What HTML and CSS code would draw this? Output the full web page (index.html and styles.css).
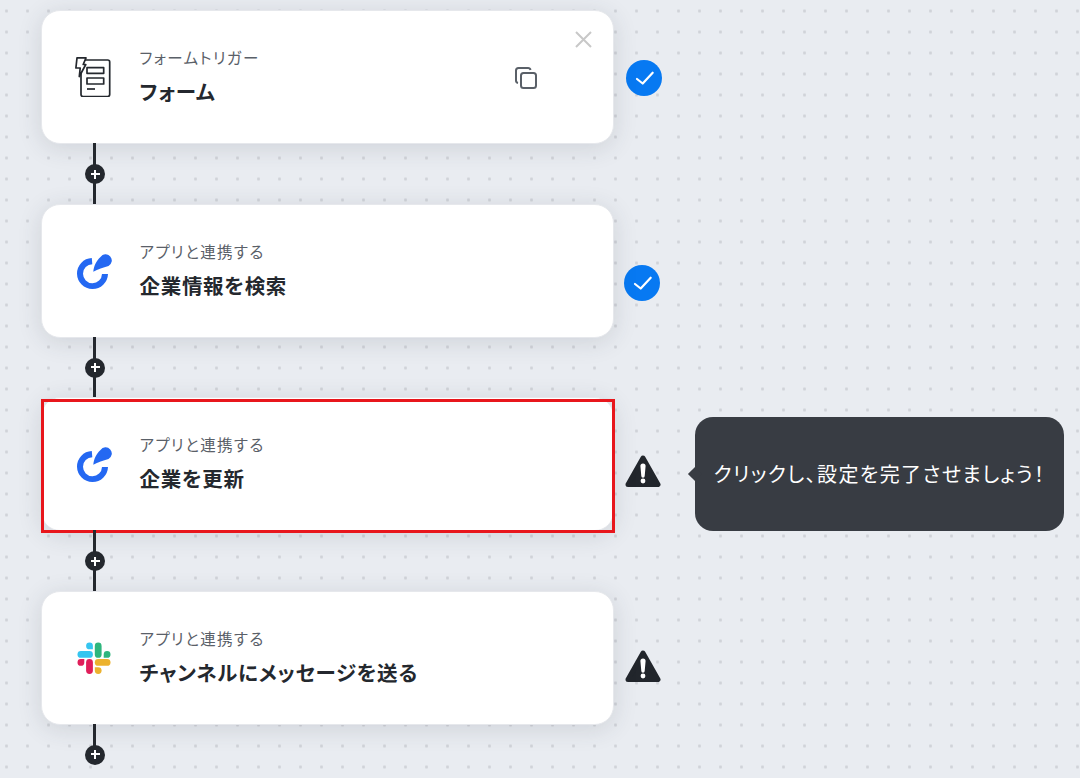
FILE: index.html
```html
<!DOCTYPE html>
<html lang="ja">
<head>
  <meta charset="UTF-8" />
  <title>フロー</title>
  <link rel="stylesheet" href="styles.css">
</head>
<body>
  <svg class="defs" width="0" height="0">
    <symbol id="app-logo" viewBox="0 0 36 36">
      <path d="M15.8 5 A15.5 15.5 0 1 0 32 21 L26 21 A9.5 9.5 0 1 1 16.3 11.2 Z" fill="#2468f2"/>
      <path d="M17.3 18.7 C18 13 20 8 24.5 4 A6.2 6.2 0 1 1 32.5 13 C27 15 22 16 17.3 18.7 Z" fill="#2468f2"/>
    </symbol>
    <symbol id="warn" viewBox="0 0 36 33">
      <path d="M18 3 L33 29.5 H3 Z" fill="#22262c" stroke="#22262c" stroke-width="5" stroke-linejoin="round"/>
      <path d="M15.4 11 a2.6 2.6 0 0 1 5.2 0 L19.7 21 a1.7 1.7 0 0 1 -3.4 0 Z" fill="#fff"/>
      <circle cx="18" cy="26" r="2.4" fill="#fff"/>
    </symbol>
    <symbol id="check" viewBox="0 0 36 36">
      <circle cx="18" cy="18" r="18" fill="#0779f2"/>
      <path d="M11 19 L16.7 23.5 L26.7 12.7" fill="none" stroke="#fff" stroke-width="2.2" stroke-linecap="round" stroke-linejoin="round"/>
    </symbol>
  </svg>

  <main class="flow">
    <section class="step">
      <div class="card">
        <svg class="card-icon form-icon" viewBox="0 0 36 40" fill="none" stroke="#24282e" stroke-width="1.7" stroke-linejoin="round">
          <path d="M9 3 H32.7 a2 2 0 0 1 2 2 V37.5 a2 2 0 0 1 -2 2 H8 a2 2 0 0 1 -2 -2 V14"/>
          <path d="M2 .9 H11 L8.2 7.5 H10.8 L4.3 19.5 L5.2 11 H.9 Z" fill="#fff"/>
          <rect x="12" y="10.7" width="16.7" height="5.6"/>
          <rect x="12" y="21" width="16.7" height="6"/>
          <path d="M12 32 H20"/>
        </svg>
        <div class="card-text">
          <p class="card-label">フォームトリガー</p>
          <p class="card-title">フォーム</p>
        </div>
        <svg class="copy-icon" viewBox="0 0 24 24" fill="none" stroke="#5a6068" stroke-width="2">
          <path d="M4 17 a2.5 2.5 0 0 1 -2 -2.5 V4.5 A2.5 2.5 0 0 1 4.5 2 H14 a2.5 2.5 0 0 1 2.5 2"/>
          <rect x="7" y="7" width="15" height="15" rx="2.5"/>
        </svg>
        <svg class="close-icon" viewBox="0 0 17 17" stroke="#c8c8c8" stroke-width="2"><path d="M1 1 L16 16 M16 1 L1 16"/></svg>
      </div>
      <svg class="status status-first"><use href="#check"/></svg>
    </section>
    <div class="connector"><span class="plus"></span></div>

    <section class="step">
      <div class="card">
        <svg class="card-icon"><use href="#app-logo"/></svg>
        <div class="card-text">
          <p class="card-label">アプリと連携する</p>
          <p class="card-title">企業情報を検索</p>
        </div>
      </div>
      <svg class="status status-second"><use href="#check"/></svg>
    </section>
    <div class="connector"><span class="plus"></span></div>

    <section class="step">
      <div class="card card-active">
        <svg class="card-icon"><use href="#app-logo"/></svg>
        <div class="card-text">
          <p class="card-label">アプリと連携する</p>
          <p class="card-title">企業を更新</p>
        </div>
      </div>
      <svg class="status status-warn"><use href="#warn"/></svg>
      <div class="tooltip">クリックし、設定を完了させましょう！</div>
    </section>
    <div class="connector"><span class="plus"></span></div>

    <section class="step">
      <div class="card">
        <svg class="card-icon" viewBox="0 0 36 36">
          <g fill="#36c5f0">
            <path d="M13.5 2.5 a3.4 3.4 0 0 0 0 6.8 h3.4 V5.9 a3.4 3.4 0 0 0 -3.4 -3.4"/>
            <rect x="1.5" y="11" width="15.4" height="6.8" rx="3.4"/>
          </g>
          <g fill="#2eb67d">
            <path d="M34.5 14.4 a3.4 3.4 0 0 0 -6.8 0 v3.4 h3.4 a3.4 3.4 0 0 0 3.4 -3.4"/>
            <rect x="18.8" y="2.5" width="6.8" height="15.3" rx="3.4"/>
          </g>
          <g fill="#ecb22e">
            <path d="M22.2 34 a3.4 3.4 0 0 0 0 -6.8 h-3.4 v3.4 a3.4 3.4 0 0 0 3.4 3.4"/>
            <rect x="18.8" y="19" width="15.7" height="6.8" rx="3.4"/>
          </g>
          <g fill="#e01e5a">
            <path d="M1.5 22.4 a3.4 3.4 0 0 0 6.8 0 V19 H4.9 a3.4 3.4 0 0 0 -3.4 3.4"/>
            <rect x="10.1" y="19" width="6.8" height="15" rx="3.4"/>
          </g>
        </svg>
        <div class="card-text">
          <p class="card-label">アプリと連携する</p>
          <p class="card-title">チャンネルにメッセージを送る</p>
        </div>
      </div>
      <svg class="status status-warn status-last"><use href="#warn"/></svg>
    </section>
    <div class="connector connector-last"><span class="plus"></span></div>
  </main>
</body>
</html>
```
FILE: styles.css
```css
* {
  margin: 0;
  padding: 0;
  box-sizing: border-box;
}
html, body {
  height: 778px;
  overflow: hidden;
}
body {
  font-family: "Noto Sans CJK JP", "Noto Sans", sans-serif;
  font-feature-settings: "palt";
  background-color: #e9ecf1;
  background-image: radial-gradient(circle, #d0d3d9 1.3px, transparent 1.6px);
  background-size: 21px 21px;
  background-position: -4px 0.5px;
  color: #24282e;
}
.defs {
  position: absolute;
}
.flow {
  padding: 10px 0 0 41px;
}
.step {
  position: relative;
  display: flex;
  align-items: flex-start;
}
.card {
  position: relative;
  display: flex;
  align-items: center;
  flex: none;
  width: 573px;
  height: 134px;
  padding-left: 34px;
  background: #fff;
  border: 1px solid #e6e8ec;
  border-radius: 19px;
  box-shadow: 0 4px 24px rgba(50, 60, 70, 0.14);
}
.card-active::after {
  content: "";
  box-sizing: border-box;
  position: absolute;
  left: -1px;
  top: 1px;
  width: 573.5px;
  height: 134px;
  border: 3.5px solid #e8161c;
}
.card-icon {
  flex: none;
  width: 36px;
  height: 36px;
}
.form-icon {
  height: 40px;
  margin-left: -1px;
  margin-right: 1px;
}
.card-text {
  margin-left: 27.5px;
  margin-top: -2px;
}
.card-label {
  font-size: 15.5px;
  line-height: 20px;
  letter-spacing: 1.4px;
  color: #5a6068;
}
.card-title {
  margin-top: 10px;
  font-size: 20.5px;
  line-height: 28px;
  font-weight: 700;
  letter-spacing: 0.7px;
  color: #24282e;
}
.copy-icon {
  position: absolute;
  top: 55px;
  left: 472px;
  width: 24px;
  height: 24px;
}
.close-icon {
  position: absolute;
  top: 19.5px;
  left: 532.5px;
  width: 17px;
  height: 17px;
}
.status {
  flex: none;
  width: 36px;
  height: 36px;
}
.status-first {
  margin: 50px 0 0 12px;
}
.status-second {
  margin: 61.5px 0 0 10px;
}
.status-warn {
  height: 33px;
  margin: 58px 0 0 11px;
}
.status-last {
  margin-top: 59.5px;
}
.tooltip {
  position: absolute;
  left: 654px;
  top: 20px;
  display: flex;
  align-items: center;
  justify-content: center;
  width: 369px;
  height: 114px;
  padding: 0 0 2px 0;
  background: #383c43;
  border-radius: 18px;
  color: #fff;
  font-size: 20px;
  letter-spacing: 1.4px;
  white-space: nowrap;
}
.tooltip::before {
  content: "";
  position: absolute;
  left: -5px;
  top: 52px;
  width: 10px;
  height: 10px;
  background: #383c43;
  transform: rotate(45deg);
}
.connector {
  position: relative;
  width: 3px;
  height: 61.5px;
  margin: -1px 0 -1px 52px;
  background: #24282e;
}
.connector-last {
  height: 30px;
}
.plus {
  position: absolute;
  left: -8px;
  top: 21px;
  width: 20px;
  height: 20px;
  border-radius: 50%;
  background-color: #24282e;
  background-image: linear-gradient(#fff, #fff), linear-gradient(#fff, #fff);
  background-size: 9px 2.4px, 2.4px 9px;
  background-position: center;
  background-repeat: no-repeat;
}
```
